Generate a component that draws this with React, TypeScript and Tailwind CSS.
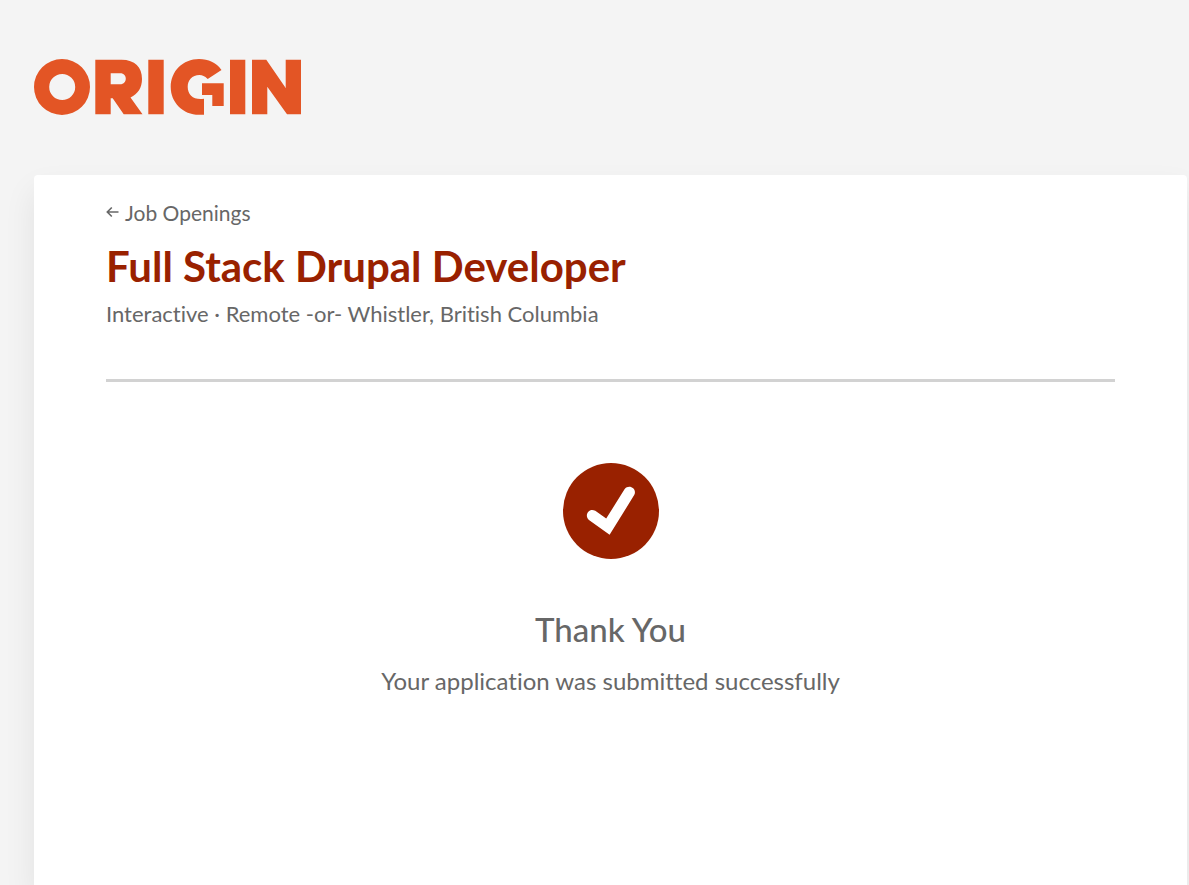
function Logo() {
  return (
    <svg
      role="img"
      aria-label="Origin"
      viewBox="0 0 267 56"
      className="h-14 w-[267px] fill-[#e35525]"
    >
      <path
        fillRule="evenodd"
        d="M28 0a28 28 0 1 1 0 56a28 28 0 1 1 0-56ZM28.2 15a13 13 0 1 0 0 26a13 13 0 1 0 0-26Z"
      />
      <path
        fillRule="evenodd"
        d="M61.3 .8H87.500C101 .8 108 8.500 108 20C108 28.500 104 35 96.500 38.500L108.500 55.300H89.700L78.700 39.300H76.700V55.300H61.300ZM76.700 14.300V25.300H86.200C93.700 25.300 93.700 14.300 86.200 14.300Z"
      />
      <path d="M114.300 .8H129.700V55.300H114.300ZM196 .8H211.300V55.300H196Z" />
      <path d="M187.500 11L173.700 20C170.500 17 168.500 16 165.500 16C158 16 153.700 21.300 153.700 28C153.700 36 160 41.500 170 39.800V55.800H165C149 55.800 136.700 43.500 136.700 28C136.700 12 149 0 165 0C174.500 0 182 3.500 187.500 11Z" />
      <path d="M168 24.300H189.700V47H178.300V36H168Z" />
      <path d="M218 .8H232.300L251.700 29V.8H267V55.300H253L233.300 27.700V55.300H218Z" />
    </svg>
  );
}

function BackArrow() {
  return (
    <svg
      aria-hidden="true"
      viewBox="0 0 13 12"
      className="mb-0.5 h-3 w-[13px] fill-none stroke-[#676767] stroke-[1.6]"
    >
      <path d="M12.500 6H1.500M5.800 1.500L1.300 6L5.800 10.500" />
    </svg>
  );
}

function SuccessIcon() {
  return (
    <svg aria-hidden="true" viewBox="0 0 96 96" className="size-24">
      <circle cx="48" cy="48" r="48" fill="#992100" />
      <path
        fill="#fff"
        d="M32.300 47.800L43.200 55.600L61.500 26.300C66 20.500 74.500 25.800 71.200 32.100L46.600 71.800L26.300 57.300C20.500 52.300 26 44.200 32.300 47.800Z"
      />
    </svg>
  );
}

export default function App() {
  return (
    <div className="flex min-h-screen flex-col overflow-hidden bg-[#f4f4f4] pr-0.5 pl-[34px] font-['Lato','Liberation_Sans',sans-serif] text-[#676767] [font-variant-ligatures:none]">
      <header className="pt-[59px] pb-[60px]">
        <Logo />
      </header>
      <main className="flex-1 rounded-t bg-white px-[72px] pt-6 shadow-[0_16px_32px_rgba(0,0,0,0.08)]">
        <div className="border-b-3 border-[#d2d2d2] pb-12">
          <a href="#openings" className="inline-flex items-center gap-1.5 text-[21px] leading-7">
            <BackArrow />
            Job Openings
          </a>
          <h1 className="mt-[11px] text-[42px] leading-14 font-bold text-[#992100]">
            Full Stack Drupal Developer
          </h1>
          <p className="mt-1 mb-px text-[22px] leading-8">
            Interactive · Remote -or- Whistler, British Columbia
          </p>
        </div>
        <section className="flex flex-col items-center pt-[81px] pb-12 text-center">
          <SuccessIcon />
          <h2 className="mt-[46px] text-[33px] leading-12 font-medium">Thank You</h2>
          <p className="mt-3 text-[24px] leading-8">
            Your application was submitted successfully
          </p>
        </section>
      </main>
    </div>
  );
}
